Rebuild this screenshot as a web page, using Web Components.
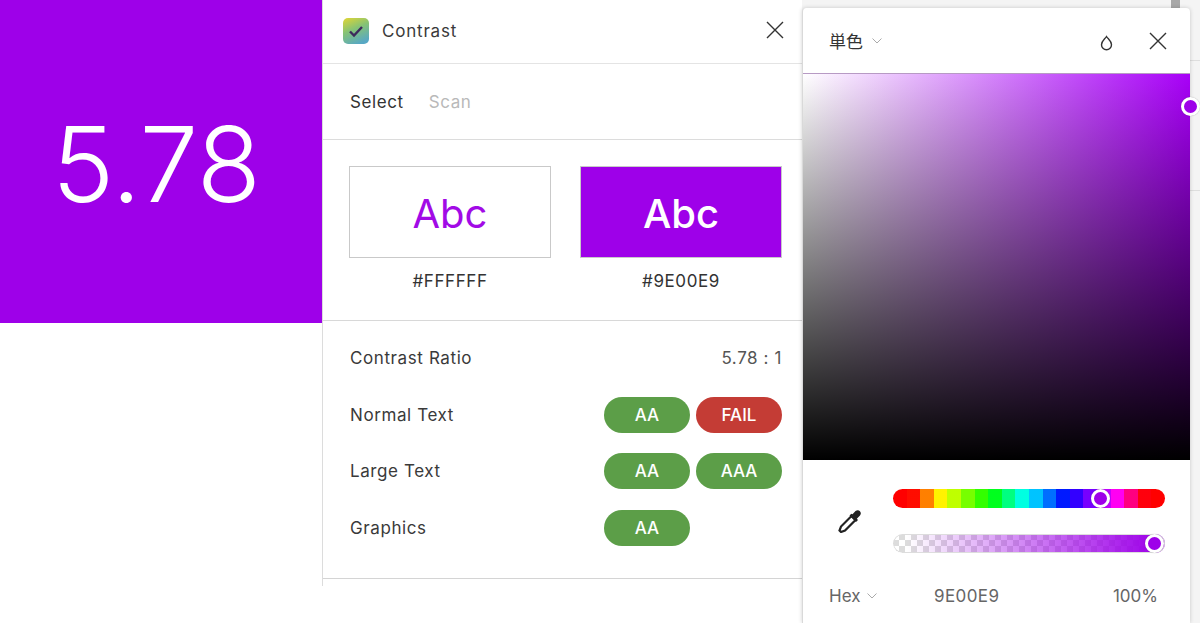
<!DOCTYPE html>
<html lang="en">
<head>
<meta charset="utf-8">
<title>Contrast</title>
<style>
  html, body { margin: 0; height: 100%; background: #fff; overflow: hidden; }
  body { font-family: Inter, "Noto Sans CJK JP", sans-serif; }
</style>
</head>
<body>
<contrast-screen>
  <result-tile slot="tile">5.78</result-tile>
  <contrast-panel slot="panel">
    <swatch-card slot="swatches" label="#FFFFFF">Abc</swatch-card>
    <swatch-card slot="swatches" label="#9E00E9" filled>Abc</swatch-card>
    <rating-row slot="rows" label="Contrast Ratio"><span class="ratio">5.78 : 1</span></rating-row>
    <rating-row slot="rows" label="Normal Text"><grade-pill>AA</grade-pill><grade-pill fail>FAIL</grade-pill></rating-row>
    <rating-row slot="rows" label="Large Text"><grade-pill>AA</grade-pill><grade-pill>AAA</grade-pill></rating-row>
    <rating-row slot="rows" label="Graphics" left><grade-pill>AA</grade-pill></rating-row>
  </contrast-panel>
  <color-picker slot="picker"></color-picker>
</contrast-screen>

<script>
const closeIcon = `<svg width="18" height="18" viewBox="0 0 18 18" fill="none" stroke="#333" stroke-width="1.4"><path d="M1 1 17 17M17 1 1 17"/></svg>`;
const chevron = `<svg width="10" height="6" viewBox="0 0 10 6" fill="none" stroke="#aaa" stroke-width="1"><path d="M.5.5 5 5 9.5.5"/></svg>`;

// the hue track is banded, not smooth: [position %, hue]
const hueStops = [[7, 0], [18, 60], [36, 120], [49, 180], [64, 240], [82, 300], [93, 360]];
function hueAt(pos) {
  if (pos <= hueStops[0][0]) return 0;
  for (let i = 1; i < hueStops.length; i++) {
    const [p0, h0] = hueStops[i - 1];
    const [p1, h1] = hueStops[i];
    if (pos <= p1) return h0 + (h1 - h0) * (pos - p0) / (p1 - p0);
  }
  return 360;
}
function hueBands() {
  const out = [];
  const step = 100 / 20;
  for (let i = 0; i < 20; i++) {
    const c = `hsl(${Math.round(hueAt(i * step + step / 2))} 100% 50%)`;
    out.push(`${c} ${i * step}% ${(i + 1) * step}%`);
  }
  return `linear-gradient(to right, ${out.join(', ')})`;
}

customElements.define('contrast-screen', class extends HTMLElement {
  constructor() {
    super();
    this.attachShadow({ mode: 'open' });
    this.shadowRoot.innerHTML = `<style>
      :host { display: grid; grid-template-columns: 322px 480px 398px; height: 623px; overflow: hidden; }
    </style><slot name="tile"></slot><slot name="panel"></slot><slot name="picker"></slot>`;
  }
});

customElements.define('result-tile', class extends HTMLElement {
  constructor() {
    super();
    this.attachShadow({ mode: 'open' });
    this.shadowRoot.innerHTML = `<style>
      :host { display: block; height: 323px; background: #9e00e9; color: #fff; font: 330 105px/1 Inter, sans-serif; }
      div { display: flex; justify-content: center; height: 323px; padding: 111px 9px 0 0; box-sizing: border-box; }
    </style><div><slot></slot></div>`;
  }
});

customElements.define('contrast-panel', class extends HTMLElement {
  constructor() {
    super();
    this.attachShadow({ mode: 'open' });
    this.shadowRoot.innerHTML = `<style>
      :host { display: block; height: 586px; box-sizing: border-box; border-left: 1.5px solid #dcdcdc; color: #333; font: 400 17px Inter, sans-serif; }
      header { height: 64px; display: flex; align-items: center; padding: 0 18px 0 20px; border-bottom: 1.5px solid #e4e4e4; box-sizing: border-box; }
      .logo { width: 26px; height: 26px; margin-right: 13px; margin-top: -2px; }
      .title { flex: 1; margin-top: -2px; color: #3a3a3a; letter-spacing: .8px; }
      .close { display: flex; margin-top: -4px; }
      nav { height: 76px; display: flex; align-items: center; gap: 25px; padding-left: 27px; border-bottom: 1.5px solid #dcdcdc; box-sizing: border-box; letter-spacing: .6px; }
      nav .off { color: #b9b9b9; }
      .swatches { height: 181px; display: flex; gap: 29px; padding: 26px 0 0 26px; border-bottom: 1.5px solid #d8d8d8; box-sizing: border-box; }
      .rows { padding: 9px 20px 22px 27px; border-bottom: 1.5px solid #d4d4d4; }
    </style>
    <header>
      <svg class="logo" viewBox="0 0 26 26">
        <defs><linearGradient id="lg" x1="0.15" y1="0" x2="0.6" y2="1"><stop offset="0" stop-color="#d8d43a"/><stop offset=".45" stop-color="#86c374"/><stop offset="1" stop-color="#58a8c4"/></linearGradient></defs>
        <rect width="26" height="26" rx="5" fill="url(#lg)"/>
        <path d="M7 13.5 11 17.5 19 9" fill="none" stroke="#3d2a5c" stroke-width="2.4"/>
      </svg>
      <span class="title">Contrast</span>
      <span class="close">${closeIcon}</span>
    </header>
    <nav><span>Select</span><span class="off">Scan</span></nav>
    <div class="swatches"><slot name="swatches"></slot></div>
    <div class="rows"><slot name="rows"></slot></div>`;
  }
});

customElements.define('swatch-card', class extends HTMLElement {
  constructor() {
    super();
    this.attachShadow({ mode: 'open' });
    this.shadowRoot.innerHTML = `<style>
      :host { display: block; width: 202px; text-align: center; }
      .box { height: 92px; box-sizing: border-box; border: 1.5px solid #c9c9c9; padding-top: 3px; display: flex; align-items: center; justify-content: center; font-size: 40px; color: #a20ae6; }
      :host([filled]) .box { background: #9e00e9; color: #fff; font-weight: 500; }
      .label { margin-top: 13px; font-size: 17px; line-height: 20px; color: #333; letter-spacing: .6px; }
    </style><div class="box"><slot></slot></div><div class="label"></div>`;
    this.shadowRoot.querySelector('.label').textContent = this.getAttribute('label');
  }
});

customElements.define('rating-row', class extends HTMLElement {
  constructor() {
    super();
    this.attachShadow({ mode: 'open' });
    this.shadowRoot.innerHTML = `<style>
      :host { display: flex; align-items: center; justify-content: space-between; height: 56.5px; color: #3a3a3a; letter-spacing: .6px; }
      .pills { display: flex; gap: 6px; }
      :host([left]) .pills { width: 178px; }
      ::slotted(.ratio) { color: #555; }
    </style><span class="label"></span><div class="pills"><slot></slot></div>`;
    this.shadowRoot.querySelector('.label').textContent = this.getAttribute('label');
  }
});

customElements.define('grade-pill', class extends HTMLElement {
  constructor() {
    super();
    this.attachShadow({ mode: 'open' });
    this.shadowRoot.innerHTML = `<style>
      :host { display: flex; align-items: center; justify-content: center; width: 86px; height: 36px; border-radius: 18px; background: #5c9e48; color: #fff; font-size: 17px; font-weight: 500; letter-spacing: 0; }
      :host([fail]) { background: #c43c35; }
    </style><slot></slot>`;
  }
});

customElements.define('color-picker', class extends HTMLElement {
  constructor() {
    super();
    this.attachShadow({ mode: 'open' });
    this.shadowRoot.innerHTML = `<style>
      :host { display: block; position: relative; height: 623px; box-sizing: border-box; padding-top: 8px; font: 400 17px Inter, "Noto Sans CJK JP", sans-serif;
        background:
          linear-gradient(#dedede,#dedede) 0 60px/100% 1px no-repeat,
          linear-gradient(#dedede,#dedede) 0 190px/100% 1px no-repeat,
          #f4f4f4; }
      .scroll { position: absolute; top: 0; left: 369px; width: 9px; height: 8px; background: #a8a8a8; }
      .win { width: 388px; height: 615px; box-sizing: border-box; background: #fff; border-left: 1px solid #d9d9d9; border-radius: 4px 4px 0 0; box-shadow: 0 0 4px rgba(0,0,0,.18); position: relative; }
      header { height: 65px; display: flex; align-items: center; padding: 0 23px 0 26px; box-sizing: border-box; color: #333; }
      .kind { display: flex; align-items: center; gap: 9px; flex: 1; }
      .drop { margin-right: 36px; display: flex; margin-top: 4px; }
      .close { display: flex; }
      .sv { height: 387px; background: linear-gradient(to top, #000, transparent), linear-gradient(to right, #fff, #a800f8); border-top: 1px solid #b79ac4; box-sizing: border-box; }
      .thumb { position: absolute; box-sizing: border-box; width: 19px; height: 19px; border-radius: 50%; border: 3px solid #fff; background: #9e00e9; box-shadow: 0 0 1px rgba(0,0,0,.35); }
      .controls { height: 122px; display: flex; align-items: center; padding-left: 35px; }
      .pipette { width: 24px; height: 24px; margin-right: 31px; }
      .bars { display: flex; flex-direction: column; gap: 26px; }
      .bar { width: 272px; height: 19px; border-radius: 10px; position: relative; overflow: visible; }
      .alpha { background: linear-gradient(to right, rgba(158,0,233,0) 5%, #9e00e9 97%), repeating-conic-gradient(#dcdcdc 0 25%, #fff 0 50%) 0 0/12px 12px; box-shadow: inset 0 0 0 1px #ddd; }
      footer { display: flex; align-items: center; padding: 4px 32px 0 26px; color: #666; }
      .hex { display: flex; align-items: center; gap: 7px; width: 105px; }
      .val { flex: 1; letter-spacing: .4px; }
    </style>
    <div class="scroll"></div>
    <div class="win">
      <header>
        <span class="kind">単色 ${chevron}</span>
        <span class="drop"><svg width="13" height="17" viewBox="0 0 13 17" fill="none" stroke="#333" stroke-width="1.4"><path d="M6.5 2.5C5 5 1.5 7 1.5 10.8A5 5 0 0 0 11.5 10.8C11.5 7 8 5 6.5 2.5Z"/></svg></span>
        <span class="close">${closeIcon}</span>
      </header>
      <div class="sv"></div>
      <div class="thumb" style="left:378px;top:89px"></div>
      <div class="controls">
        <svg class="pipette" viewBox="0 0 24 24">
          <path d="M13.5 7 17.5 11 7 21.5 3 23 1.5 21.5 3 17.5Z" fill="#fff" stroke="#222" stroke-width="2.2"/>
          <path d="M11.5 6.5 18 13 20 11 18.8 9.8 22 6.5C24.5 3.5 21 -.5 17.5 2L14.5 5.2 13.3 4.7Z" fill="#222"/>
        </svg>
        <div class="bars">
          <div class="bar hue" style="background:${hueBands()}"><div class="thumb" style="left:198px;top:0"></div></div>
          <div class="bar alpha"><div class="thumb" style="left:252px;top:0"></div></div>
        </div>
      </div>
      <footer>
        <span class="hex">Hex ${chevron}</span>
        <span class="val">9E00E9</span>
        <span>100%</span>
      </footer>
    </div>`;
  }
});
</script>
</body>
</html>
